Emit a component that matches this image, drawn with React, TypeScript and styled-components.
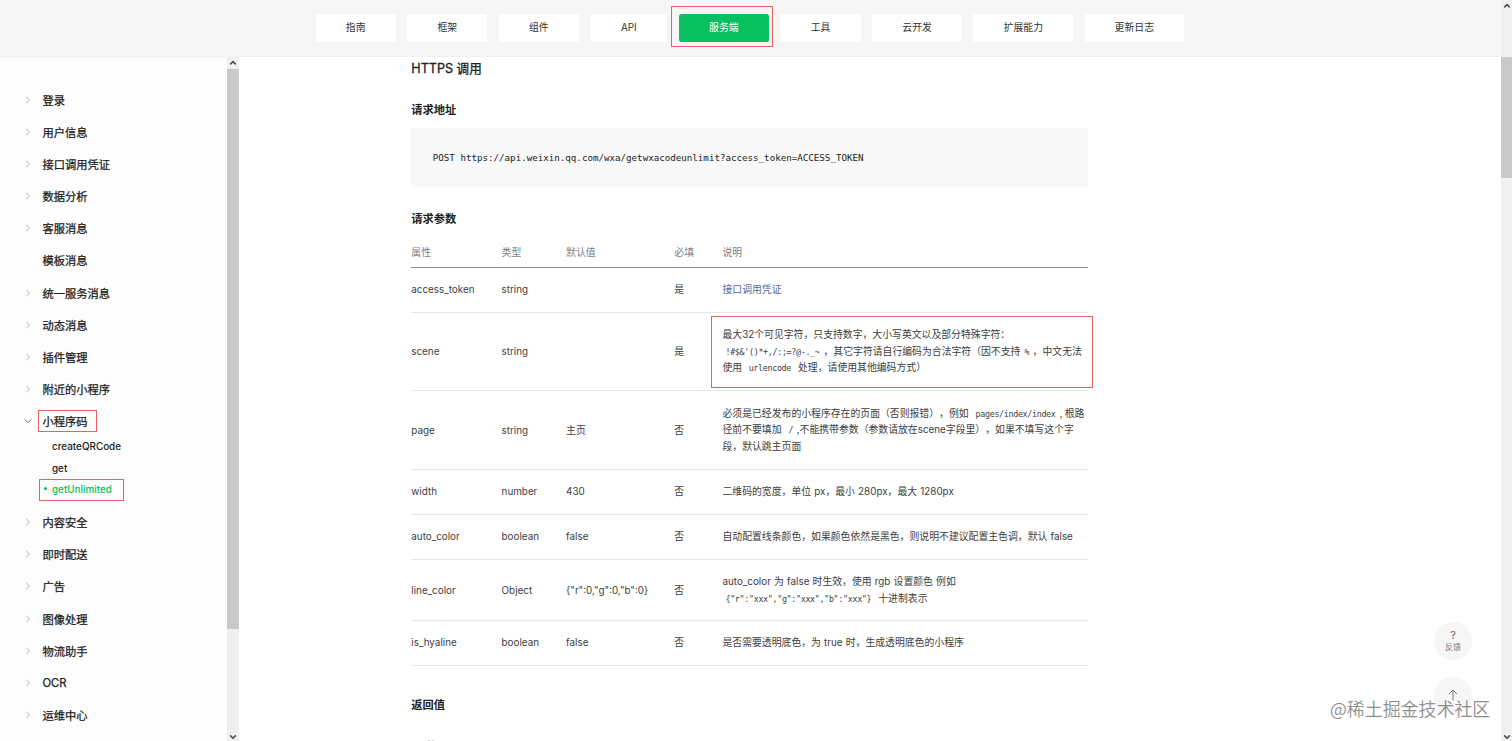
import React from "react";
import styled, { createGlobalStyle } from "styled-components";

const GlobalStyle = createGlobalStyle`
  * { box-sizing: border-box; }
  body {
    margin: 0;
    overflow: hidden;
    background: #fff;
    color: #3d3d3d;
    font-family: Inter, "Noto Sans CJK SC", sans-serif;
    font-size: 9.85px;
    text-spacing-trim: space-all;
  }
`;

const RED = "#e8605f";

const Screen = styled.div`
  display: flex;
  width: 1512px;
  height: 741px;
  overflow: hidden;
`;

const Page = styled.div`
  display: flex;
  flex-direction: column;
  width: 1501px;
  height: 741px;
`;

const Header = styled.header`
  display: flex;
  flex: none;
  gap: 11.3px;
  height: 57px;
  padding: 13.5px 0 0 315.5px;
  background: #f6f6f6;
  border-bottom: 1px solid #f0f0f0;
`;

const NavItem = styled.a<{ $width: number; $active?: boolean }>`
  position: relative;
  display: flex;
  align-items: center;
  justify-content: center;
  flex: none;
  width: ${(p) => p.$width}px;
  height: 28.5px;
  padding-bottom: 1.4px;
  border-radius: 2.5px;
  background: ${(p) => (p.$active ? "#07c160" : "#fff")};
  color: ${(p) => (p.$active ? "#fff" : "#333")};
`;

const Mark = styled.span<{ $top: number; $right: number; $bottom: number; $left: number }>`
  position: absolute;
  top: ${(p) => p.$top}px;
  right: ${(p) => p.$right}px;
  bottom: ${(p) => p.$bottom}px;
  left: ${(p) => p.$left}px;
  border: 1px solid ${RED};
  pointer-events: none;
`;

const Body = styled.div`
  display: flex;
  flex: 1;
  min-height: 0;
`;

const Sidebar = styled.nav`
  flex: none;
  width: 227px;
  padding-top: 26.8px;
  overflow: hidden;
  background: #fdfdfd;
`;

const MenuRow = styled.div`
  display: flex;
  align-items: center;
  height: 32.13px;
  padding-left: 24px;
  color: #1c1c1c;
  font-size: 11.25px;
  -webkit-text-stroke: 0.25px #1c1c1c;
`;

const ChevronSlot = styled.span`
  display: flex;
  width: 18.5px;
`;

const MenuLabel = styled.span`
  position: relative;
`;

const SubMenu = styled.div`
  margin: -2.2px 0 5.8px;
`;

const SubRow = styled.div<{ $active?: boolean }>`
  position: relative;
  display: flex;
  align-items: center;
  height: 21.8px;
  padding-left: 52px;
  color: ${(p) => (p.$active ? "#07c160" : "#222")};
  font-size: 9.9px;
  font-weight: 500;
`;

const Dot = styled.i`
  position: absolute;
  left: 44px;
  top: 8.6px;
  width: 3px;
  height: 3px;
  border-radius: 50%;
  background: #07c160;
`;

const ScrollTrack = styled.div<{ $width: number }>`
  display: flex;
  flex-direction: column;
  flex: none;
  width: ${(p) => p.$width}px;
  background: #f0f0f0;
`;

const ScrollButton = styled.div<{ $height: number }>`
  display: flex;
  align-items: center;
  justify-content: center;
  height: ${(p) => p.$height}px;
`;

const ScrollThumb = styled.div<{ $height: number; $offset?: number }>`
  height: ${(p) => p.$height}px;
  margin-top: ${(p) => p.$offset ?? 0}px;
  margin-bottom: auto;
  background: #c9c9c9;
`;

const Main = styled.main`
  width: 677px;
  margin-left: 172.3px;
  color: #3d3d3d;
`;

const SectionTitle = styled.h3`
  height: 23px;
  margin: 0;
  color: #222;
  font-size: 12.6px;
  font-weight: 400;
  line-height: 24px;
  -webkit-text-stroke: 0.3px #222;
`;

const SubTitle = styled.h4<{ $before: number }>`
  height: 20px;
  margin: ${(p) => p.$before}px 0 0;
  color: #222;
  font-size: 11.25px;
  font-weight: 700;
  line-height: 20px;
`;

const CodeBlock = styled.pre`
  height: 59px;
  margin: 8px 0 0;
  padding: 0 21.5px;
  background: #f8f8f8;
  color: #222;
  font-family: "DejaVu Sans Mono", monospace;
  font-size: 9.18px;
  line-height: 59px;
`;

const Row = styled.div<{ $height: number; $head?: boolean }>`
  display: grid;
  grid-template-columns: 90.3px 64.5px 108.2px 48.2px 1fr;
  align-items: center;
  width: 677px;
  height: ${(p) => p.$height}px;
  padding: ${(p) => (p.$head ? "8px 0 0" : p.$height === 45 ? "0 0 1px" : "0")};
  border-bottom: 1px solid ${(p) => (p.$head ? "#8c8c8c" : "#e6e6e6")};
  color: ${(p) => (p.$head ? "#808080" : "#3d3d3d")};
`;

const Cell = styled.div`
  line-height: 16.4px;
  white-space: nowrap;
`;

const Note = styled(Cell)`
  position: relative;
  padding-bottom: 1px;
  word-spacing: 0.4px;
`;

const Line = styled.div`
  height: 16.4px;
`;

const Code = styled.code<{ $l?: number; $r?: number }>`
  margin: 0 ${(p) => p.$r ?? 6}px 0 ${(p) => p.$l ?? 6}px;
  color: #3d3d3d;
  font-family: "DejaVu Sans Mono", monospace;
  font-size: 8.4px;
  letter-spacing: -0.34px;
`;

const Comma = styled.span`
  margin: 0 2px 0 0.8px;
`;

const Link = styled.a`
  color: #576b95;
`;

const FloatButton = styled.div<{ $top: number }>`
  position: absolute;
  top: ${(p) => p.$top}px;
  left: 1434px;
  display: flex;
  flex-direction: column;
  align-items: center;
  justify-content: center;
  width: 38px;
  height: 38px;
  padding-bottom: 2px;
  border-radius: 50%;
  background: #f6f6f6;
  color: #7a7a7a;
  font-size: 8px;
  line-height: 10px;
`;

const Question = styled.span`
  color: #666;
  font-size: 11px;
  line-height: 13px;
`;

const Watermark = styled.div`
  position: absolute;
  left: 1330px;
  top: 695px;
  color: #8e8e8e;
  font-family: "Noto Sans CJK SC", sans-serif;
  font-size: 17.95px;
  font-weight: 350;
  line-height: 26px;
  white-space: nowrap;
`;

const Chevron = ({ open }: { open?: boolean }) => (
  <svg width="8" height="8" viewBox="0 0 8 8" fill="none" stroke={open ? "#777" : "#b5b5b5"} strokeWidth="1">
    <path d={open ? "M0.6 2.3 L4 5.7 L7.4 2.3" : "M2.2 0.8 L5.6 4 L2.2 7.2"} />
  </svg>
);

const Arrow = ({ down }: { down?: boolean }) => (
  <svg width="8" height="6" viewBox="0 0 8 6" fill="none" stroke="#4a4a4a" strokeWidth="1.5">
    <path d={down ? "M1.2 1.4 L4 4.2 L6.8 1.4" : "M1.2 4.4 L4 1.6 L6.8 4.4"} />
  </svg>
);

const NAV: { label: string; width: number; active?: boolean }[] = [
  { label: "指南", width: 80.3 },
  { label: "框架", width: 80.3 },
  { label: "组件", width: 80.3 },
  { label: "API", width: 77 },
  { label: "服务端", width: 90.5, active: true },
  { label: "工具", width: 80.3 },
  { label: "云开发", width: 90.2 },
  { label: "扩展能力", width: 99.8 },
  { label: "更新日志", width: 99.5 },
];

const MENU_TOP = [
  "登录",
  "用户信息",
  "接口调用凭证",
  "数据分析",
  "客服消息",
  "模板消息",
  "统一服务消息",
  "动态消息",
  "插件管理",
  "附近的小程序",
];

const MENU_BOTTOM = ["内容安全", "即时配送", "广告", "图像处理", "物流助手", "OCR", "运维中心"];

const MenuItem = ({ label }: { label: string }) => (
  <MenuRow>
    <ChevronSlot>{label !== "模板消息" && <Chevron />}</ChevronSlot>
    <MenuLabel>{label}</MenuLabel>
  </MenuRow>
);

const ROWS: { height: number; cells: string[]; note: React.ReactNode }[] = [
  { height: 45, cells: ["access_token", "string", "", "是"], note: <Link>接口调用凭证</Link> },
  {
    height: 78,
    cells: ["scene", "string", "", "是"],
    note: (
      <>
        <Line>最大32个可见字符，只支持数字，大小写英文以及部分特殊字符：</Line>
        <Line>
          <Code $l={3} $r={4}>{"!#$&'()*+,/:;=?@-._~"}</Code>，其它字符请自行编码为合法字符（因不支持
          <Code $l={4} $r={3.5}>%</Code>，中文无法
        </Line>
        <Line>
          使用<Code $l={6.5} $r={7}>urlencode</Code>处理，请使用其他编码方式）
        </Line>
        <Mark $top={-10.5} $right={-5} $bottom={-11.5} $left={-11} />
      </>
    ),
  },
  {
    height: 79,
    cells: ["page", "string", "主页", "否"],
    note: (
      <>
        <Line>
          必须是已经发布的小程序存在的页面（否则报错），例如<Code $l={7} $r={3.5}>pages/index/index</Code>
          <Comma>,</Comma>根路
        </Line>
        <Line>
          径前不要填加<Code $l={7} $r={3.5}>/</Code>,不能携带参数（参数请放在scene字段里），如果不填写这个字
        </Line>
        <Line>段，默认跳主页面</Line>
      </>
    ),
  },
  { height: 45, cells: ["width", "number", "430", "否"], note: "二维码的宽度，单位 px，最小 280px，最大 1280px" },
  {
    height: 45,
    cells: ["auto_color", "boolean", "false", "否"],
    note: "自动配置线条颜色，如果颜色依然是黑色，则说明不建议配置主色调，默认 false",
  },
  {
    height: 61,
    cells: ["line_color", "Object", '{"r":0,"g":0,"b":0}', "否"],
    note: (
      <>
        <Line>auto_color 为 false 时生效，使用 rgb 设置颜色 例如</Line>
        <Line>
          <Code $l={3} $r={7}>{'{"r":"xxx","g":"xxx","b":"xxx"}'}</Code>十进制表示
        </Line>
      </>
    ),
  },
  { height: 45, cells: ["is_hyaline", "boolean", "false", "否"], note: "是否需要透明底色，为 true 时，生成透明底色的小程序" },
];

export default function App() {
  return (
    <>
      <GlobalStyle />
      <Screen>
        <Page>
          <Header>
            {NAV.map((n) => (
              <NavItem key={n.label} $width={n.width} $active={n.active}>
                {n.label}
                {n.active && <Mark $top={-7.5} $right={-3.5} $bottom={-5} $left={-7.5} />}
              </NavItem>
            ))}
          </Header>
          <Body>
            <Sidebar>
              {MENU_TOP.map((m) => (
                <MenuItem key={m} label={m} />
              ))}
              <MenuRow>
                <ChevronSlot>
                  <Chevron open />
                </ChevronSlot>
                <MenuLabel>
                  小程序码
                  <Mark $top={-3} $right={-9} $bottom={-3} $left={-5} />
                </MenuLabel>
              </MenuRow>
              <SubMenu>
                <SubRow>createQRCode</SubRow>
                <SubRow>get</SubRow>
                <SubRow $active>
                  <Dot />
                  getUnlimited
                  <Mark $top={0.1} $right={103} $bottom={-1} $left={39} />
                </SubRow>
              </SubMenu>
              {MENU_BOTTOM.map((m) => (
                <MenuItem key={m} label={m} />
              ))}
            </Sidebar>
            <ScrollTrack $width={12}>
              <ScrollButton $height={12}>
                <Arrow />
              </ScrollButton>
              <ScrollThumb $height={560} />
              <ScrollButton $height={9}>
                <Arrow down />
              </ScrollButton>
            </ScrollTrack>
            <Main>
              <SectionTitle>HTTPS 调用</SectionTitle>
              <SubTitle $before={20}>请求地址</SubTitle>
              <CodeBlock>POST https://api.weixin.qq.com/wxa/getwxacodeunlimit?access_token=ACCESS_TOKEN</CodeBlock>
              <SubTitle $before={22}>请求参数</SubTitle>
              <Row $height={39} $head>
                {["属性", "类型", "默认值", "必填", "说明"].map((h) => (
                  <Cell key={h}>{h}</Cell>
                ))}
              </Row>
              {ROWS.map((r) => (
                <Row key={r.cells[0]} $height={r.height}>
                  {r.cells.map((c, i) => (
                    <Cell key={i}>{c}</Cell>
                  ))}
                  <Note>{r.note}</Note>
                </Row>
              ))}
              <SubTitle $before={29}>返回值</SubTitle>
              <SubTitle $before={20.5}>Buffer</SubTitle>
            </Main>
          </Body>
        </Page>
        <ScrollTrack $width={11}>
          <ScrollButton $height={12}>
            <Arrow />
          </ScrollButton>
          <ScrollThumb $height={121} $offset={45} />
          <ScrollButton $height={9}>
            <Arrow down />
          </ScrollButton>
        </ScrollTrack>
      </Screen>
      <FloatButton $top={622}>
        <Question>?</Question>
        反馈
      </FloatButton>
      <FloatButton $top={677}>
        <svg width="12" height="12" viewBox="0 0 12 12" fill="none" stroke="#777" strokeWidth="1">
          <path d="M6 11.5 V1.2 M1.8 5.2 L6 1 L10.2 5.2" />
        </svg>
      </FloatButton>
      <Watermark>@稀土掘金技术社区</Watermark>
    </>
  );
}
